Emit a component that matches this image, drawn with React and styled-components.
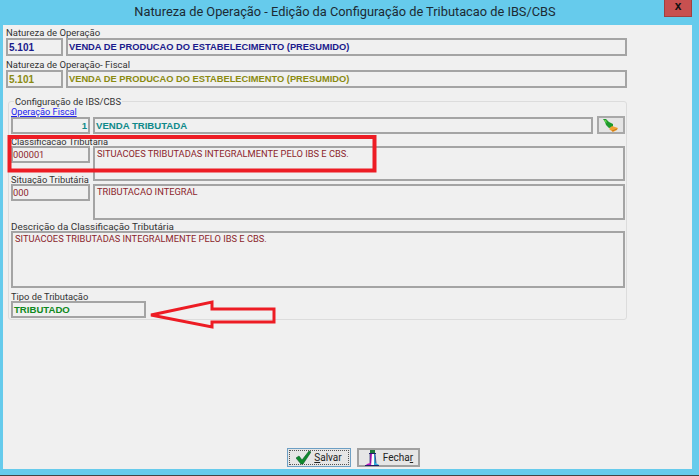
import React from "react"
import styled, { createGlobalStyle } from "styled-components"

const GlobalStyle = createGlobalStyle`
  html, body {
    margin: 0;
    padding: 0;
    background: #66cbec;
  }
  * {
    box-sizing: border-box;
  }
`

const Win = styled.div`
  position: relative;
  width: 699px;
  height: 476px;
  display: flex;
  flex-direction: column;
  background: #66cbec;
  border-bottom: 1px solid #444;
  overflow: hidden;
  font-family: Roboto, sans-serif;
`

const TitleBar = styled.div`
  height: 25px;
  flex: none;
  text-align: center;
  font-family: Roboto, sans-serif;
  font-size: 12.8px;
  line-height: 24px;
  color: #1c2a33;
  padding-right: 9px;
`

const CloseBtn = styled.div`
  position: absolute;
  top: 0;
  right: 7px;
  width: 28px;
  height: 17px;
  background: #c75050;
  border: 1px solid #a03f3f;
  border-top: 0;
  color: #111;
  font-family: "Liberation Sans", sans-serif;
  font-weight: bold;
  font-size: 12px;
  line-height: 13px;
  text-align: center;
`

const Client = styled.div`
  flex: 1;
  margin: 0 7px 6px 3px;
  background: #f0f0f0;
  display: flex;
  flex-direction: column;
  padding: 2px 0 0 3px;
`

const Label = styled.div`
  font-size: ${p => p.$fs || 9.3}px;
  line-height: 11px;
  height: ${p => p.$h || 10}px;
  color: #333;
  white-space: nowrap;
`

const Row = styled.div`
  display: flex;
  gap: 3px;
  margin-bottom: ${p => p.$mb || 0}px;
`

const Field = styled.div`
  width: ${p => (p.$w ? p.$w + "px" : "auto")};
  flex: ${p => (p.$w ? "none" : 1)};
  height: ${p => p.$h || 17}px;
  border: 2px solid #a4a4a4;
  background: #f0f0f0;
  padding: 0 ${p => (p.$right ? 1 : p.$pad ?? 1)}px;
  display: flex;
  align-items: ${p => (p.$top ? "flex-start" : "center")};
  justify-content: ${p => (p.$right ? "flex-end" : "flex-start")};
  color: ${p => p.$color || "#333"};
  font-family: ${p => (p.$bold ? '"Liberation Sans", sans-serif' : "Roboto, sans-serif")};
  font-weight: ${p => (p.$bold ? "bold" : "normal")};
  font-size: ${p => p.$fs || (p.$bold ? 9.6 : 9.3)}px;
  line-height: 11px;
  white-space: nowrap;
  overflow: hidden;
`

const TopFields = styled.div`
  width: 621px;
`

const Group = styled.fieldset`
  width: 619px;
  height: 224px;
  margin: 8px 0 0 2px;
  padding: 0 1px 0 2px;
  border: 1px solid #dcdcdc;
  border-radius: 3px;
  display: block;
  min-width: 0;
`

const Legend = styled.legend`
  margin-left: 3px;
  padding: 0 1px;
  font-size: 9.4px;
  line-height: 11px;
  color: #333;
`

const LinkLabel = styled.a`
  display: block;
  height: 10px;
  font-size: 9.2px;
  line-height: 9px;
  color: #2222ee;
  text-decoration: underline;
  white-space: nowrap;
`

const SquareBtn = styled.div`
  width: 28px;
  height: 18px;
  flex: none;
  margin: -1px 0 0 1px;
  border: 2px solid #a8a8a8;
  background: #e4e4e4;
  display: flex;
  align-items: center;
  justify-content: center;
`

const Footer = styled.div`
  margin-top: auto;
  display: flex;
  gap: 6px;
  padding: 0 0 2px 281px;
`

const Btn = styled.div`
  width: ${p => p.$w}px;
  height: 19px;
  display: flex;
  align-items: center;
  justify-content: center;
  gap: 3px;
  font-size: 10px;
  color: #222;
  background: #e6e6e6;
  border: ${p => (p.$active ? "1px solid #6d9fc4" : "2px solid #a0a0a0")};
  outline: ${p => (p.$active ? "1px dotted #555" : "none")};
  outline-offset: -3px;
  u {
    text-underline-offset: 1px;
  }
`

const Overlay = styled.svg`
  position: absolute;
  left: 0;
  top: 0;
  pointer-events: none;
`

const BrushIcon = () => (
  <svg width="16" height="15" viewBox="0 0 16 15">
    <path d="M0 1 L3 1 L6 4 L10 6 L10 9 L6 10 L3 7 L2 4 Z" fill="#1f9a2b" />
    <path d="M1 2 L3 2 L4 5 L2 4 Z" fill="#5fd04a" />
    <path d="M9 8 L15 10 L14 12 L10 14 L6 11 Z" fill="#f0a030" />
    <path d="M9 13 L14 11" stroke="#c87818" strokeWidth="1" fill="none" />
  </svg>
)

const CheckIcon = () => (
  <svg width="15" height="15" viewBox="0 0 15 15">
    <path d="M0 8 L3 6 L6 10 L13 1 L15 2 L7 14 L5 14 Z" fill="#0f8a2c" stroke="#0a5a2c" strokeWidth="0.6" />
  </svg>
)

const DoorIcon = () => (
  <svg width="16" height="16" viewBox="0 0 16 16">
    <rect x="6" y="0" width="5" height="3" fill="#1f7a3a" />
    <rect x="5" y="3" width="7" height="1" fill="#20206a" />
    <path d="M6 4 L6 13 L3 14 L2 15 L7 15 L8 4 Z" fill="#c018c0" />
    <path d="M8 4 L8 15 L10 15 L10 4 Z" fill="#ffffff" />
    <path d="M10 4 L11 4 L12 13 L15 15 L10 15 Z" fill="#30a8d8" />
    <path d="M1 15.5 L15 15.5" stroke="#20206a" strokeWidth="1" />
    <path d="M6 4 L6 13 M11 4 L12 13" stroke="#20206a" strokeWidth="0.7" fill="none" />
  </svg>
)

const App = () => (
  <>
    <GlobalStyle />
    <Win>
      <TitleBar>Natureza de Operação - Edição da Configuração de Tributacao de IBS/CBS</TitleBar>
      <CloseBtn>x</CloseBtn>
      <Client>
        <TopFields>
          <Label $h={11} $fs={9.5}>Natureza de Operação</Label>
          <Row $mb={3}>
            <Field $w={57} $bold $h={18} $fs={10} $color="#1a1a8c">5.101</Field>
            <Field $bold $h={18} $fs={9.3} $color="#1a1a8c">VENDA DE PRODUCAO DO ESTABELECIMENTO (PRESUMIDO)</Field>
          </Row>
          <Label $h={11} $fs={9.5}>Natureza de Operação- Fiscal</Label>
          <Row>
            <Field $w={57} $bold $h={18} $fs={10} $color="#8a8a10">5.101</Field>
            <Field $bold $h={18} $fs={9.3} $color="#8a8a10">VENDA DE PRODUCAO DO ESTABELECIMENTO (PRESUMIDO)</Field>
          </Row>
        </TopFields>
        <Group>
          <Legend>Configuração de IBS/CBS</Legend>
          <LinkLabel>Operação Fiscal</LinkLabel>
          <Row $mb={2}>
            <Field $w={79} $bold $right $color="#0f8a8a">1</Field>
            <Field $bold $color="#0f8a8a">VENDA TRIBUTADA</Field>
            <SquareBtn><BrushIcon /></SquareBtn>
          </Row>
          <Label>Classificacao Tributaria</Label>
          <Row $mb={-7}>
            <Field $w={79} $pad={0} $color="#8c1f2c">000001</Field>
            <Field $h={35} $pad={2} $color="#8c1f2c" $top>SITUACOES TRIBUTADAS INTEGRALMENTE PELO IBS E CBS.</Field>
          </Row>
          <Label>Situação Tributária</Label>
          <Row $mb={1}>
            <Field $w={79} $pad={0} $color="#8c1f2c">000</Field>
            <Field $h={36} $pad={2} $color="#8c1f2c" $top>TRIBUTACAO INTEGRAL</Field>
          </Row>
          <Label $fs={9.9}>Descrição da Classificação Tributária</Label>
          <Row $mb={3}>
            <Field $h={57} $pad={2} $color="#8c1f2c" $top>SITUACOES TRIBUTADAS INTEGRALMENTE PELO IBS E CBS.</Field>
          </Row>
          <Label>Tipo de Tributação</Label>
          <Row>
            <Field $w={135} $bold $color="#0f8a20">TRIBUTADO</Field>
          </Row>
        </Group>
        <Footer>
          <Btn $w={64} $active><CheckIcon /><span><u>S</u>alvar</span></Btn>
          <Btn $w={63}><DoorIcon /><span>Fecha<u>r</u></span></Btn>
        </Footer>
      </Client>
      <Overlay width="699" height="476" viewBox="0 0 699 476">
        <rect x="9.5" y="137" width="365" height="33.5" fill="none" stroke="#ed1c24" strokeWidth="4" />
        <path d="M151 315 L212 302 L212 309 L274 309 L274 322 L212 322 L212 327 Z" fill="none" stroke="#ed1c24" strokeWidth="3" />
      </Overlay>
    </Win>
  </>
)

export default App
